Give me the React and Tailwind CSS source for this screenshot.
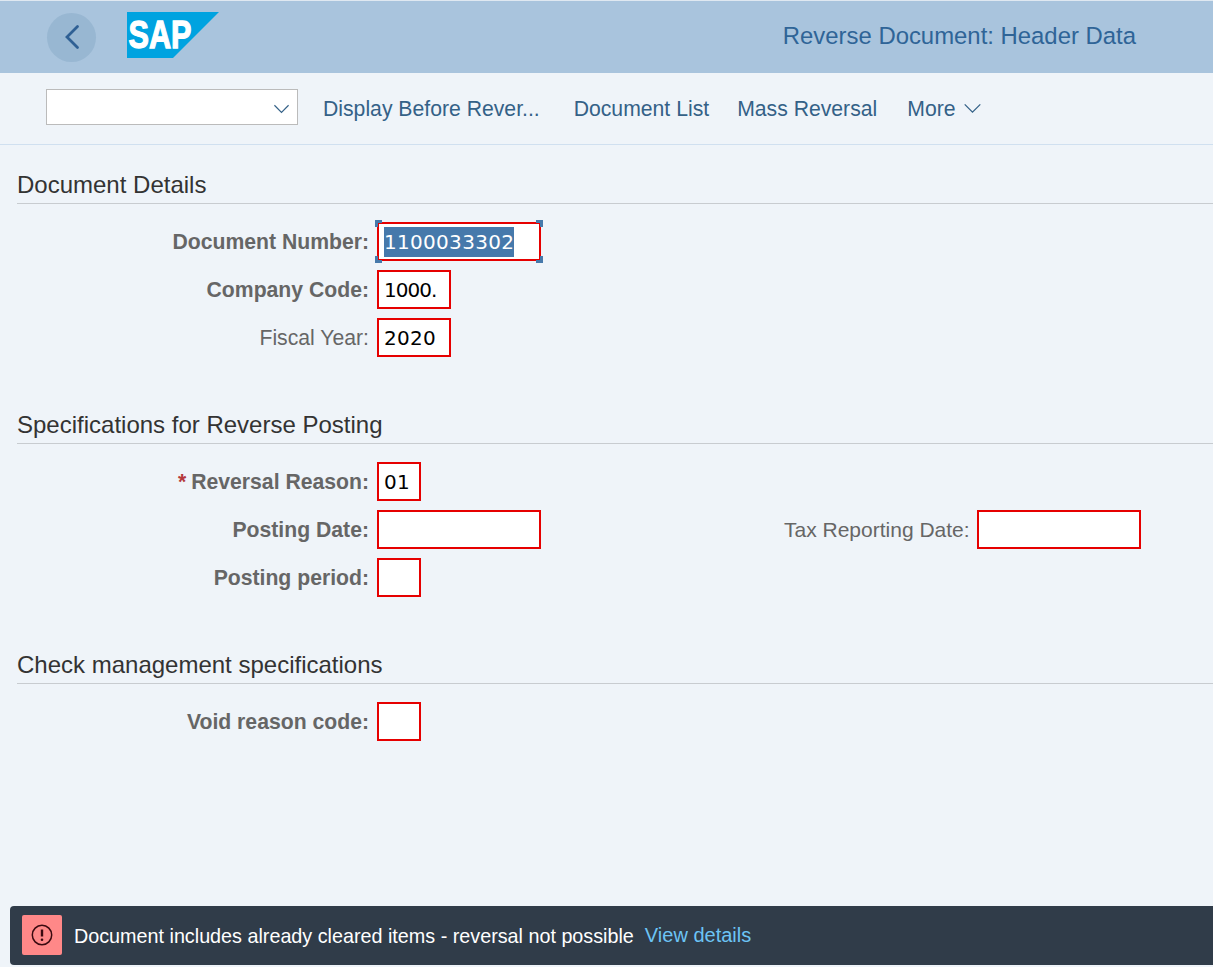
import React from 'react';

const Field = ({ label, required, bold = true, width, value, tracking = 'tracking-[0.3px]' }) => (
  <div className="flex items-center h-[39px]">
    <div className={`w-[369px] text-right text-[21.2px] text-[#666666] ${bold ? 'font-bold' : ''}`}>
      {required && <span className="text-[#b5393c] mr-[5px]">*</span>}
      {label}
    </div>
    <div className={`ml-2 h-[39px] ${width} border-2 border-[#e60000] bg-white pl-[5px] flex items-center text-[20px] text-black font-['DejaVu_Sans',sans-serif] ${tracking}`}>
      {value}
    </div>
  </div>
);

const Section = ({ title, children }) => (
  <section className="h-[240px]">
    <div className="ml-[17px] h-[59px] flex items-end border-b border-[#c8ccd0] text-[24px] text-[#333333]">
      {title}
    </div>
    <div className="pt-[18px] flex flex-col gap-[9px]">{children}</div>
  </section>
);

const ChevronDown = ({ className }) => (
  <svg className={className} viewBox="0 0 20 12" fill="none" stroke="currentColor" strokeWidth="1.4">
    <path d="M1.5 1.5 L10 10 L18.5 1.5" />
  </svg>
);

export default function App() {
  return (
    <div className="h-[967px] w-[1213px] overflow-hidden flex flex-col bg-[#eff4f9] font-['Liberation_Sans',Arial,sans-serif]">
      <header className="h-[73px] shrink-0 bg-[#a9c4dd] border-t border-[#dfe8f1] flex items-center pl-[47px] pr-[77px]">
        <button className="w-[49px] h-[49px] rounded-full bg-[#98b7d2] flex items-center justify-center text-[#2f6094]">
          <svg width="16" height="26" viewBox="0 0 16 26" fill="none" stroke="currentColor" strokeWidth="2.8" strokeLinecap="round">
            <path d="M13.5 2.5 L3 13 L13.5 23.5" />
          </svg>
        </button>
        <svg className="ml-[31px] mb-[4px]" width="92" height="46" viewBox="0 0 92 46">
          <polygon points="0,0 92,0 46,46 0,46" fill="#00a3e0" />
          <text x="1.5" y="36" fill="#ffffff" stroke="#ffffff" strokeWidth="1.3" fontFamily="Liberation Sans, Arial, sans-serif" fontWeight="700" fontSize="39" textLength="63" lengthAdjust="spacingAndGlyphs">SAP</text>
        </svg>
        <h1 className="ml-auto mb-[3px] text-[23.9px] text-[#2f6497]">Reverse Document: Header Data</h1>
      </header>

      <nav className="h-[72px] shrink-0 border-b border-[#d0e0f0] flex items-center pl-[46px] pb-[3px] text-[21.2px] text-[#346187]">
        <div className="w-[252px] h-[36px] bg-white border border-[#bbbbbb] flex items-center justify-end pr-[7px] text-[#346187]">
          <ChevronDown className="mt-[3px] w-[17px] h-[10px]" />
        </div>
        <span className="ml-[25px] mt-[3px]">Display Before Rever...</span>
        <span className="ml-[34px] mt-[3px]">Document List</span>
        <span className="ml-[28px] mt-[3px]">Mass Reversal</span>
        <span className="ml-[30px] mt-[3px]">More</span>
        <ChevronDown className="ml-[7px] mt-[3px] w-[19px] h-[11px]" />
      </nav>

      <main>
        <Section title="Document Details">
          <div className="relative">
            <Field
              label="Document Number:"
              width="w-[164px]"
              value={<span className="bg-[#4679ab] text-white">1100033302</span>}
            />
            <span className="absolute left-[375px] top-[-2px] w-[7px] h-[7px] border-l-[3px] border-t-[3px] border-[#4679ab]" />
            <span className="absolute left-[536px] top-[-2px] w-[7px] h-[7px] border-r-[3px] border-t-[3px] border-[#4679ab]" />
            <span className="absolute left-[375px] top-[34px] w-[7px] h-[7px] border-l-[3px] border-b-[3px] border-[#4679ab]" />
            <span className="absolute left-[536px] top-[34px] w-[7px] h-[7px] border-r-[3px] border-b-[3px] border-[#4679ab]" />
          </div>
          <Field label="Company Code:" width="w-[74px]" value="1000." tracking="tracking-[-1px]" />
          <Field label="Fiscal Year:" bold={false} width="w-[74px]" value="2020" />
        </Section>

        <Section title="Specifications for Reverse Posting">
          <Field label="Reversal Reason:" required width="w-[44px]" value="01" />
          <div className="flex items-center">
            <Field label="Posting Date:" width="w-[164px]" />
            <div className="ml-[243px] w-[185px] whitespace-nowrap text-[21px] text-[#666666]">Tax Reporting Date:</div>
            <div className="ml-2 h-[39px] w-[164px] border-2 border-[#e60000] bg-white" />
          </div>
          <Field label="Posting period:" width="w-[44px]" />
        </Section>

        <Section title="Check management specifications">
          <Field label="Void reason code:" width="w-[44px]" />
        </Section>
      </main>

      <footer className="mt-auto mb-[2px] ml-[10px] h-[59px] shrink-0 rounded-l-[4px] bg-[#303c49] flex items-center pl-[12px] text-[19.75px]">
        <div className="w-[40px] h-[40px] mb-[1px] rounded-[2px] bg-[#ff8888] flex items-center justify-center">
          <svg width="22" height="22" viewBox="0 0 22 22" fill="none" stroke="#3a0a10" strokeWidth="1.5">
            <circle cx="11" cy="11" r="9.7" />
            <path d="M11 5.5 V12.5" strokeWidth="2.4" />
            <circle cx="11" cy="15.8" r="1.3" fill="#3a0a10" stroke="none" />
          </svg>
        </div>
        <span className="ml-[12px] mt-[2px] text-white">Document includes already cleared items - reversal not possible</span>
        <span className="ml-[11px] mb-[1px] text-[#6cc4f5] text-[20px]">View details</span>
      </footer>
    </div>
  );
}
